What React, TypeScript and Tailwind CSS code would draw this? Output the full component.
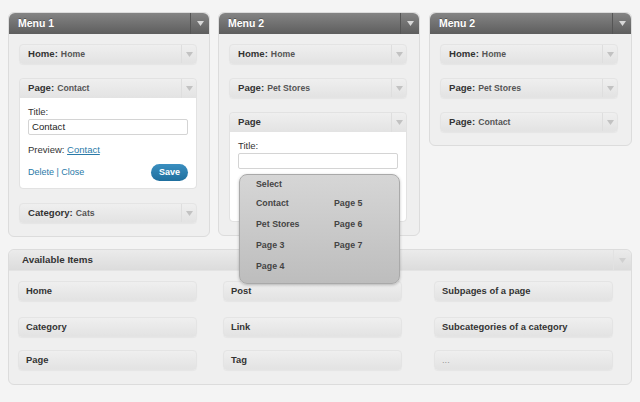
import React from "react";

const Tri = ({ color = "#c2c2c2" }: { color?: string }) => (
  <svg width="7" height="5" viewBox="0 0 7 5">
    <polygon points="0,0 7,0 3.5,5" fill={color} />
  </svg>
);

const Label = ({ label, sub }: { label: string; sub?: string }) => (
  <div className="flex-1 flex items-center pl-[8px] text-[9.6px] font-bold text-[#333]">
    <span className="flex items-baseline">
      <span>{label}</span>
      {sub && (
        <>
          <span>:</span>
          <span className="ml-[3px] text-[8.7px] text-[#555]">{sub}</span>
        </>
      )}
    </span>
  </div>
);

const Item = ({ label, sub }: { label: string; sub?: string }) => (
  <div className="w-[178px] h-[20px] flex items-stretch rounded-[4px] border border-[#e4e4e4] bg-gradient-to-b from-[#efefef] to-[#e3e3e3] shadow-[0_1px_1px_rgba(0,0,0,0.04)]">
    <Label label={label} sub={sub} />
    <div className="w-[15px] flex items-center justify-center border-l border-[#dedede]">
      <Tri />
    </div>
  </div>
);

const PlainItem = ({ label, gray }: { label: string; gray?: boolean }) => (
  <div className="w-[179px] h-[20px] flex items-center rounded-[4px] border border-[#e4e4e4] bg-gradient-to-b from-[#efefef] to-[#e3e3e3] pl-[7px] shadow-[0_1px_1px_rgba(0,0,0,0.04)]">
    <span className={`text-[9.4px] ${gray ? "text-[#999]" : "font-bold text-[#333]"}`}>{label}</span>
  </div>
);

const Header = ({ title }: { title: string }) => (
  <div className="h-[21px] flex items-stretch rounded-t-[6px] bg-gradient-to-b from-[#848484] to-[#5e5e5e]">
    <div className="flex-1 flex items-center pl-[9px] text-[10.5px] font-bold text-white [text-shadow:0_-1px_0_rgba(0,0,0,0.3)]">
      {title}
    </div>
    <div className="w-[19px] flex items-center justify-center border-l border-[#555]">
      <Tri color="#d8d8d8" />
    </div>
  </div>
);

const Panel = ({ title, w, children }: { title: string; w: string; children: React.ReactNode }) => (
  <div className={`${w} rounded-[6px] border border-[#dcdcdc] bg-[#efefef]`}>
    <Header title={title} />
    <div className="pl-[10px] pt-[10px] pb-[13px] flex flex-col gap-[14px]">{children}</div>
  </div>
);

const OpenItem = ({
  label,
  sub,
  children,
  bodyH,
}: {
  label: string;
  sub?: string;
  children: React.ReactNode;
  bodyH: string;
}) => (
  <div className="w-[178px] rounded-[4px] border border-[#e2e2e2] relative">
    <div className="h-[19px] flex items-stretch rounded-t-[4px] bg-gradient-to-b from-[#efefef] to-[#e3e3e3]">
      <Label label={label} sub={sub} />
      <div className="w-[15px] flex items-center justify-center border-l border-[#dedede]">
        <Tri />
      </div>
    </div>
    <div className={`${bodyH} bg-white rounded-b-[4px] px-[8px] pt-[8px]`}>{children}</div>
  </div>
);

export default function App() {
  return (
    <div className="w-[640px] h-[402px] bg-[#f4f4f4] font-['Liberation_Sans',Arial,sans-serif] overflow-hidden">
      <div className="flex items-start pl-[8px] pt-[12px]">
        <Panel title="Menu 1" w="w-[202px]">
          <Item label="Home" sub="Home" />
          <OpenItem label="Page" sub="Contact" bodyH="h-[90px]">
            <div className="text-[9.5px] text-[#333] leading-[11px]">Title:</div>
            <div className="mt-[2px] h-[16px] w-[160px] border border-[#d4d4d4] rounded-[2px] flex items-center px-[3px] text-[9.6px] text-[#222]">
              Contact
            </div>
            <div className="mt-[9px] text-[9.5px] text-[#333] leading-[11px]">
              Preview: <span className="text-[#2a7aa8] underline">Contact</span>
            </div>
            <div className="mt-[9px] flex items-center justify-between w-[160px]">
              <span className="text-[9px] text-[#2a7aa8]">Delete | Close</span>
              <span className="h-[17px] w-[37px] rounded-full bg-gradient-to-b from-[#3a8fc0] to-[#1f6f9e] text-white text-[9px] font-bold flex items-center justify-center">
                Save
              </span>
            </div>
          </OpenItem>
          <Item label="Category" sub="Cats" />
        </Panel>
        <div className="w-[8px]" />
        <Panel title="Menu 2" w="w-[202px]">
          <Item label="Home" sub="Home" />
          <Item label="Page" sub="Pet Stores" />
          <OpenItem label="Page" bodyH="h-[89px]">
            <div className="text-[9.5px] text-[#333] leading-[11px]">Title:</div>
            <div className="mt-[2px] h-[16px] w-[160px] border border-[#d4d4d4] rounded-[2px]" />
            <div className="absolute left-[9px] top-[61px] w-[161px] h-[110px] rounded-[8px] border border-[#a9a9a9] bg-gradient-to-b from-[#d6d6d6] to-[#bdbdbd] shadow-[0_1px_3px_rgba(0,0,0,0.25)] text-[8.8px] font-bold text-[#444] z-10">
              <div className="absolute left-[16px] top-[3px]">Select</div>
              <div className="absolute left-[16px] top-[22px]">Contact</div>
              <div className="absolute left-[94px] top-[22px]">Page 5</div>
              <div className="absolute left-[16px] top-[43px]">Pet Stores</div>
              <div className="absolute left-[94px] top-[43px]">Page 6</div>
              <div className="absolute left-[16px] top-[64px]">Page 3</div>
              <div className="absolute left-[94px] top-[64px]">Page 7</div>
              <div className="absolute left-[16px] top-[85px]">Page 4</div>
            </div>
          </OpenItem>
        </Panel>
        <div className="w-[9px]" />
        <Panel title="Menu 2" w="w-[203px]">
          <Item label="Home" sub="Home" />
          <Item label="Page" sub="Pet Stores" />
          <Item label="Page" sub="Contact" />
        </Panel>
      </div>
      <div className="ml-[8px] mt-[12px] w-[624px] h-[136px] rounded-[6px] border border-[#dcdcdc] bg-[#efefef]">
        <div className="h-[21px] flex items-stretch rounded-t-[6px] bg-gradient-to-b from-[#ebebeb] to-[#dcdcdc] border-b border-[#e4e4e4]">
          <div className="flex-1 flex items-center pl-[13px] text-[9.8px] font-bold text-[#333]">Available Items</div>
          <div className="w-[18px] flex items-center justify-center border-l border-[#e2e2e2]">
            <Tri color="#d0d0d0" />
          </div>
        </div>
        <div className="flex pt-[10px]">
          <div className="ml-[9px] flex flex-col">
            <PlainItem label="Home" />
            <div className="h-[16px]" />
            <PlainItem label="Category" />
            <div className="h-[13px]" />
            <PlainItem label="Page" />
          </div>
          <div className="ml-[26px] flex flex-col">
            <PlainItem label="Post" />
            <div className="h-[16px]" />
            <PlainItem label="Link" />
            <div className="h-[13px]" />
            <PlainItem label="Tag" />
          </div>
          <div className="ml-[32px] flex flex-col">
            <PlainItem label="Subpages of a page" />
            <div className="h-[16px]" />
            <PlainItem label="Subcategories of a category" />
            <div className="h-[13px]" />
            <PlainItem label="..." gray />
          </div>
        </div>
      </div>
    </div>
  );
}
